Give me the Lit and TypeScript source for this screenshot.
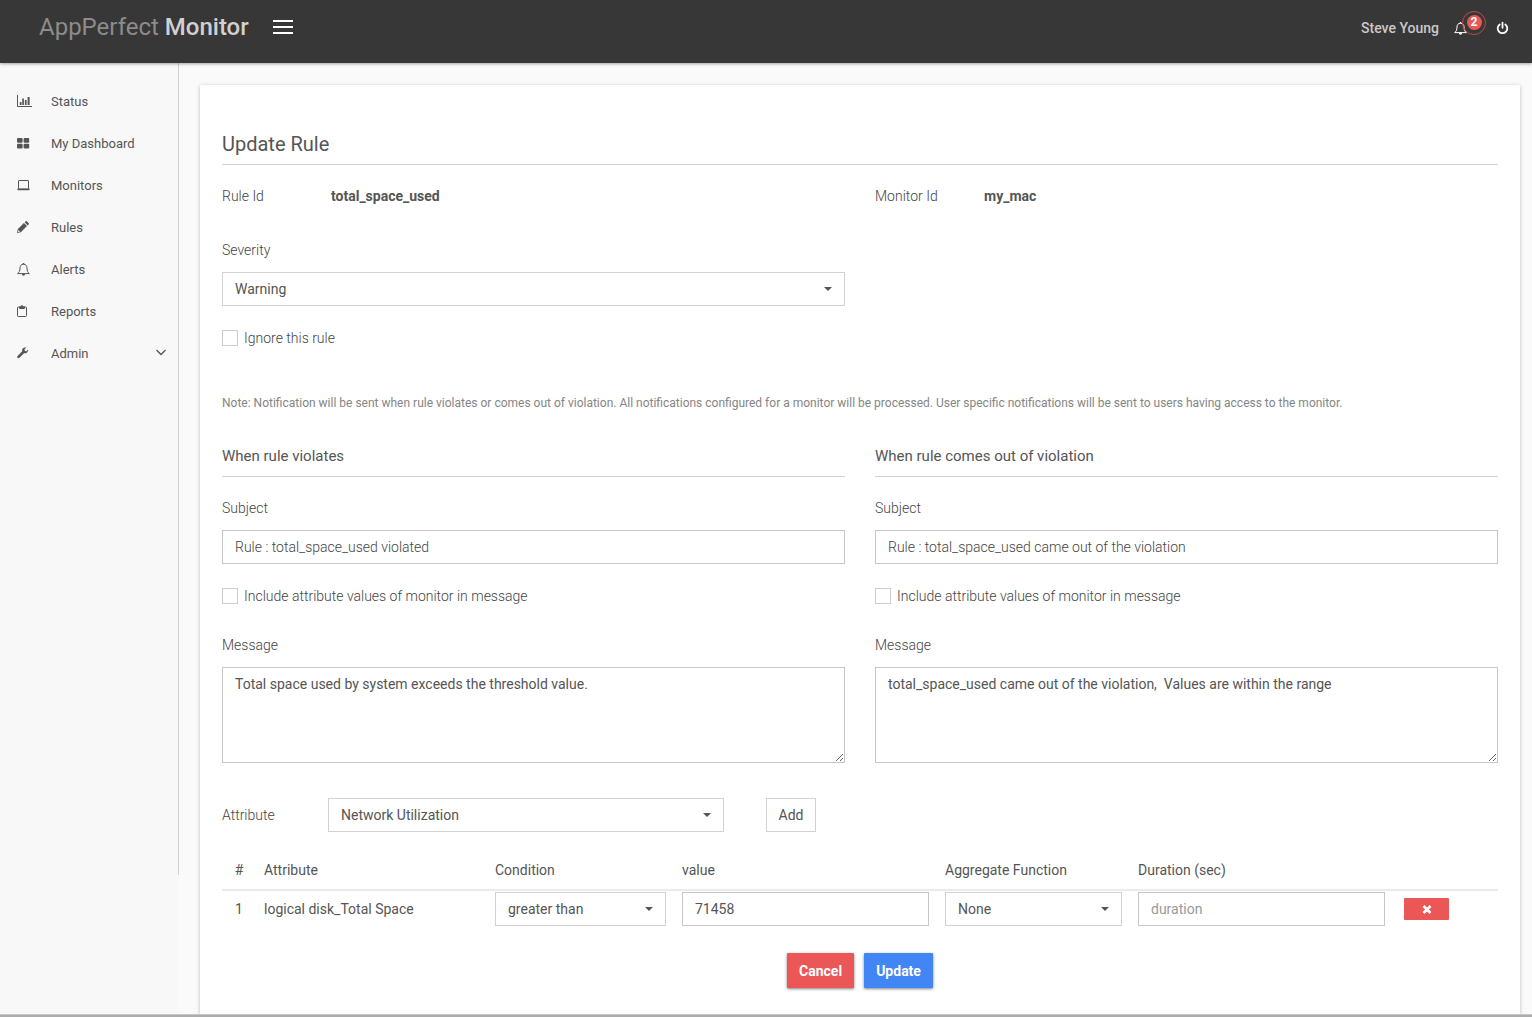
import { LitElement, html, css, svg, nothing } from "lit";
import { customElement } from "lit/decorators.js";

const glyphs = {
  chart: svg`<path d="M.5 0v11.500H15" fill="none" stroke="currentColor" stroke-width="1"/><path d="M2.800 7h1.700v3H2.800zM5.200 3.500h1.700V10H5.200zM7.900 5h1.700v5H7.900zM10.600 2h2V10h-2z"/>`,
  grid: svg`<rect x="0" y="1" width="5.600" height="4.800" rx="1"/><rect x="6.600" y="1" width="5.600" height="4.800" rx="1"/><rect x="0" y="6.800" width="5.600" height="4.800" rx="1"/><rect x="6.600" y="6.800" width="5.600" height="4.800" rx="1"/>`,
  laptop: svg`<rect x="1.500" y="1.500" width="10" height="8.500" rx=".5" fill="none" stroke="currentColor"/><path d="M.3 9.800h12.400v.6q0 .8-.8.800H1.100q-.8 0-.8-.8z"/>`,
  pencil: svg`<path d="M0 12l.7-3.800L6.900 2l3.100 3.100-6.200 6.200zM7.600 1.300l.9-.9q.7-.7 1.400 0l1.700 1.700q.7.700 0 1.400l-.9.900z"/><path d="M1.200 8.900l1.900 1.900-1.500.300-.7-.7z" fill="#f8f8f8"/>`,
  bell: svg`<path d="M6.500 1.200C4.200 1.200 3 2.900 3 5c0 2.900-.8 4.600-2.400 5.600h11.800C10.800 9.600 10 7.900 10 5c0-2.100-1.200-3.800-3.500-3.800z" fill="none" stroke="currentColor" stroke-width="1"/><path d="M5.800 0h1.400v1.500H5.800zM4.900 11h3.200q0 1.700-1.600 1.700T4.900 11z"/>`,
  clipboard: svg`<rect x=".5" y="2" width="9" height="9.500" rx=".8" fill="none" stroke="currentColor"/><path d="M2.200 1.500h1.500Q3.900.2 5 .2t1.300 1.300h1.500v2.500H2.200z"/>`,
  wrench: svg`<path d="M11.200 2.500L9.400 4.300 7.900 3.900 7.500 2.400 9.300.6Q7.200 0 5.900 1.300 4.700 2.600 5.200 4.300L.6 8.900Q-.3 9.800.5 10.800q.9.800 1.900-.1L7 6.200q1.800.5 3-.7 1.500-1.300 1.200-3z"/>`,
  power: svg`<path d="M3.700 2.500a4.800 4.800 0 1 0 5.600 0M6.500.6v5.200" fill="none" stroke="currentColor" stroke-width="1.800" stroke-linecap="round"/>`,
  cross: svg`<path d="M4.500 3l7 7M11.500 3l-7 7" fill="none" stroke="currentColor" stroke-width="2.700"/>`,
};

type Glyph = keyof typeof glyphs;

const icon = (name: Glyph) =>
  html`<svg class="icon" viewBox="0 0 16 13" width="16" height="13" aria-hidden="true">${glyphs[name]}</svg>`;

interface NavItem {
  label: string;
  glyph: Glyph;
  expandable?: boolean;
}

const navItems: NavItem[] = [
  { label: "Status", glyph: "chart" },
  { label: "My Dashboard", glyph: "grid" },
  { label: "Monitors", glyph: "laptop" },
  { label: "Rules", glyph: "pencil" },
  { label: "Alerts", glyph: "bell" },
  { label: "Reports", glyph: "clipboard" },
  { label: "Admin", glyph: "wrench", expandable: true },
];

const notices = [
  {
    id: "violates",
    title: "When rule violates",
    subject: "Rule : total_space_used violated",
    message: "Total space used by system exceeds the threshold value.",
  },
  {
    id: "recovers",
    title: "When rule comes out of violation",
    subject: "Rule : total_space_used came out of the violation",
    message: "total_space_used came out of the violation,  Values are within the range",
  },
];

@customElement("app-root")
export class AppRoot extends LitElement {
  static styles = css`
    :host {
      display: block;
      color: #555;
      font-family: Roboto, "Liberation Sans", sans-serif;
      font-size: 14px;
      line-height: 20px;
    }
    * {
      box-sizing: border-box;
    }
    a {
      color: inherit;
      text-decoration: none;
    }
    h1, h2, p {
      margin: 0;
      font-weight: 400;
    }
    button, input, select, textarea {
      font: inherit;
      color: inherit;
      margin: 0;
      border-radius: 0;
    }
    button {
      cursor: pointer;
    }
    .icon {
      display: block;
      fill: currentColor;
      overflow: visible;
    }
    .page {
      display: flex;
      flex-direction: column;
      min-height: 100vh;
      background: #fafafa;
    }
    .topbar {
      position: relative;
      display: flex;
      align-items: flex-start;
      height: 63px;
      padding: 11px 20px 0 39px;
      background: #373737;
      color: #ccc;
      box-shadow: 0 1px 3px rgba(0, 0, 0, 0.35);
    }
    .brand {
      font-size: 24px;
      line-height: 32px;
      color: #8c8c8c;
    }
    .brand-strong {
      color: #d2d0d0;
      font-weight: 500;
    }
    .menu {
      display: flex;
      flex-direction: column;
      gap: 4px;
      width: 20px;
      margin: 9px 0 0 24px;
      padding: 0;
      border: 0;
      background: none;
    }
    .menu-line {
      height: 2px;
      background: #fff;
    }
    .user {
      display: flex;
      align-items: center;
      height: 34px;
      margin-left: auto;
      color: #fff;
    }
    .user-name {
      color: #ccc8c8;
      font-weight: 500;
      margin-right: 15px;
    }
    .icon-button {
      position: relative;
      padding: 0;
      border: 0;
      background: none;
      color: #fff;
    }
    .alerts {
      margin-right: 26px;
    }
    .badge {
      position: absolute;
      left: 8px;
      top: -11px;
      width: 24px;
      height: 24px;
      border: 1px solid #c24848;
      border-radius: 50%;
      display: grid;
      place-items: center;
    }
    .badge-count {
      width: 15px;
      height: 15px;
      border-radius: 50%;
      background: #eb5757;
      font-size: 12px;
      line-height: 15px;
      font-weight: 700;
      text-align: center;
    }
    .body {
      display: flex;
      flex: 1;
    }
    .sidebar {
      flex: none;
      width: 179px;
      background: #f8f8f8;
    }
    .nav {
      min-height: calc(100vh - 205px);
      padding-top: 18px;
      border-right: 1px solid #d2d2d2;
    }
    .nav-link {
      display: flex;
      align-items: center;
      gap: 18px;
      height: 42px;
      padding: 0 12px 0 17px;
      font-size: 13px;
    }
    .nav-link svg {
      margin-bottom: 2px;
    }
    .nav-link .chevron {
      margin-left: auto;
    }
    .main {
      flex: 1;
      min-width: 0;
      padding: 22px 12px 0 21px;
      display: flex;
    }
    .card {
      flex: 1;
      min-width: 0;
      padding: 46px 22px 26px;
      background: #fff;
      box-shadow: 0 1px 4px rgba(0, 0, 0, 0.25);
    }
    .title {
      font-size: 20px;
      line-height: 26px;
      padding-bottom: 7px;
      margin-bottom: 21px;
      border-bottom: 1px solid #d2d2d2;
    }
    .columns {
      display: grid;
      grid-template-columns: 1fr 1fr;
      column-gap: 30px;
    }
    .facts {
      margin-bottom: 34px;
    }
    .fact {
      display: grid;
      grid-template-columns: 109px 1fr;
      margin: 0;
    }
    .fact dt, .label, .check {
      font-weight: 300;
      color: #444;
    }
    .fact dd {
      margin: 0;
      font-weight: 700;
    }
    .label {
      display: block;
      margin-bottom: 12px;
    }
    .check {
      display: flex;
      align-items: center;
      gap: 6px;
      margin-top: 22px;
    }
    .check input {
      appearance: none;
      width: 16px;
      height: 16px;
      border: 1px solid #ccc;
      background: #fff;
    }
    .check input:checked {
      background: #4285f4;
    }
    .picker {
      position: relative;
      display: block;
    }
    .picker::after {
      content: "";
      position: absolute;
      right: 13px;
      top: 15px;
      border: 4px solid transparent;
      border-top-color: #555;
      border-bottom: 0;
      pointer-events: none;
    }
    .control {
      display: block;
      width: 100%;
      height: 34px;
      padding: 0 12px;
      border: 1px solid #c6c6c6;
      background: #fff;
      appearance: none;
      outline-color: #4285f4;
    }
    select.control {
      border-color: #d2d2d2;
    }
    .subject {
      font-weight: 300;
      color: #444;
    }
    .message {
      height: 96px;
      padding: 6px 12px;
      resize: both;
    }
    .note {
      margin: 45px 0 33px;
      font-size: 12px;
      color: #858585;
    }
    .section-title {
      font-size: 15px;
      line-height: 20px;
      padding-bottom: 10px;
      margin-bottom: 21px;
      border-bottom: 1px solid #d2d2d2;
    }
    .notice .check {
      margin-bottom: 29px;
    }
    .adder {
      display: flex;
      align-items: center;
      margin: 35px 0 28px;
    }
    .adder .label {
      width: 106px;
      margin: 0;
    }
    .adder .picker {
      width: 31%;
      margin-right: 42px;
    }
    .add {
      height: 34px;
      padding: 0 12px;
      border: 1px solid #d2d2d2;
      background: #fff;
    }
    .rules {
      width: 100%;
      border-spacing: 0;
      table-layout: fixed;
    }
    .rules th {
      padding: 0 8px 9px;
      border-bottom: 2px solid #ebebeb;
      font-weight: 400;
      text-align: left;
    }
    .rules td {
      padding: 1px 8px 0;
    }
    .rules .col-index {
      width: 34px;
      text-align: center;
    }
    .col-condition { width: 187px; }
    .col-value { width: 263px; }
    .col-aggregate { width: 193px; }
    .col-duration { width: 263px; }
    .col-action { width: 105px; }
    .duration::placeholder {
      color: #999;
      opacity: 1;
    }
    .remove {
      display: grid;
      place-items: center;
      width: 45px;
      height: 22px;
      margin-left: 3px;
      padding: 0;
      border: 0;
      border-radius: 1px;
      background: #eb5757;
      color: #fff;
    }
    .actions {
      display: flex;
      justify-content: center;
      gap: 10px;
      margin-top: 27px;
    }
    .action {
      height: 35px;
      padding: 0 12px;
      border: 0;
      border-radius: 1px;
      color: #fff;
      font-weight: 700;
      box-shadow: 0 1px 3px rgba(0, 0, 0, 0.5);
    }
    .cancel { background: #eb5757; }
    .update { background: #4285f4; }
    .edge {
      position: relative;
      height: 3px;
      border-top: 1px solid #c8c8c8;
      background: #acacac;
    }
  `;

  private renderNotice(n: (typeof notices)[number]) {
    return html`<section class="notice">
      <h2 class="section-title">${n.title}</h2>
      <label class="label" for="subject-${n.id}">Subject</label>
      <input class="control subject" id="subject-${n.id}" type="text" .value=${n.subject} />
      <label class="check"><input type="checkbox" />Include attribute values of monitor in message</label>
      <label class="label" for="message-${n.id}">Message</label>
      <textarea class="control message" id="message-${n.id}" .value=${n.message}></textarea>
    </section>`;
  }

  render() {
    return html`<div class="page">
      <header class="topbar">
        <a class="brand" href="#">AppPerfect <span class="brand-strong">Monitor</span></a>
        <button class="menu" aria-label="Toggle menu">
          <span class="menu-line"></span><span class="menu-line"></span><span class="menu-line"></span>
        </button>
        <div class="user">
          <a class="user-name" href="#">Steve Young</a>
          <button class="icon-button alerts" aria-label="Alerts">
            ${icon("bell")}<span class="badge"><span class="badge-count">2</span></span>
          </button>
          <button class="icon-button" aria-label="Log out">${icon("power")}</button>
        </div>
      </header>
      <div class="body">
        <aside class="sidebar">
          <nav class="nav">
            ${navItems.map(
              (item) => html`<a class="nav-link" href="#">
                ${icon(item.glyph)}<span>${item.label}</span>
                ${item.expandable
                  ? html`<svg class="chevron" width="10" height="8" viewBox="0 0 10 8" aria-hidden="true">
                      <path d="M.5 1L5 5.500 9.500 1" fill="none" stroke="currentColor" stroke-width="1.300" />
                    </svg>`
                  : nothing}
              </a>`
            )}
          </nav>
        </aside>
        <main class="main">
          <div class="card">
            <h1 class="title">Update Rule</h1>
            <div class="columns facts">
              <dl class="fact"><dt>Rule Id</dt><dd>total_space_used</dd></dl>
              <dl class="fact"><dt>Monitor Id</dt><dd>my_mac</dd></dl>
            </div>
            <div class="columns">
              <div>
                <label class="label" for="severity">Severity</label>
                <span class="picker">
                  <select class="control" id="severity"><option>Warning</option></select>
                </span>
                <label class="check"><input type="checkbox" />Ignore this rule</label>
              </div>
            </div>
            <p class="note">
              Note: Notification will be sent when rule violates or comes out of violation. All notifications configured
              for a monitor will be processed. User specific notifications will be sent to users having access to the
              monitor.
            </p>
            <div class="columns">${notices.map((n) => this.renderNotice(n))}</div>
            <div class="adder">
              <label class="label" for="attribute">Attribute</label>
              <span class="picker">
                <select class="control" id="attribute"><option>Network Utilization</option></select>
              </span>
              <button class="add">Add</button>
            </div>
            <table class="rules">
              <thead>
                <tr>
                  <th class="col-index">#</th>
                  <th>Attribute</th>
                  <th class="col-condition">Condition</th>
                  <th class="col-value">value</th>
                  <th class="col-aggregate">Aggregate Function</th>
                  <th class="col-duration">Duration (sec)</th>
                  <th class="col-action"></th>
                </tr>
              </thead>
              <tbody>
                <tr>
                  <td class="col-index">1</td>
                  <td>logical disk_Total Space</td>
                  <td>
                    <span class="picker">
                      <select class="control" aria-label="Condition"><option>greater than</option></select>
                    </span>
                  </td>
                  <td><input class="control" type="text" aria-label="value" .value=${"71458"} /></td>
                  <td>
                    <span class="picker">
                      <select class="control" aria-label="Aggregate Function"><option>None</option></select>
                    </span>
                  </td>
                  <td><input class="control duration" type="text" aria-label="Duration" placeholder="duration" /></td>
                  <td><button class="remove" aria-label="Remove">${icon("cross")}</button></td>
                </tr>
              </tbody>
            </table>
            <div class="actions">
              <button class="action cancel">Cancel</button>
              <button class="action update">Update</button>
            </div>
          </div>
        </main>
      </div>
      <div class="edge"></div>
    </div>`;
  }
}
